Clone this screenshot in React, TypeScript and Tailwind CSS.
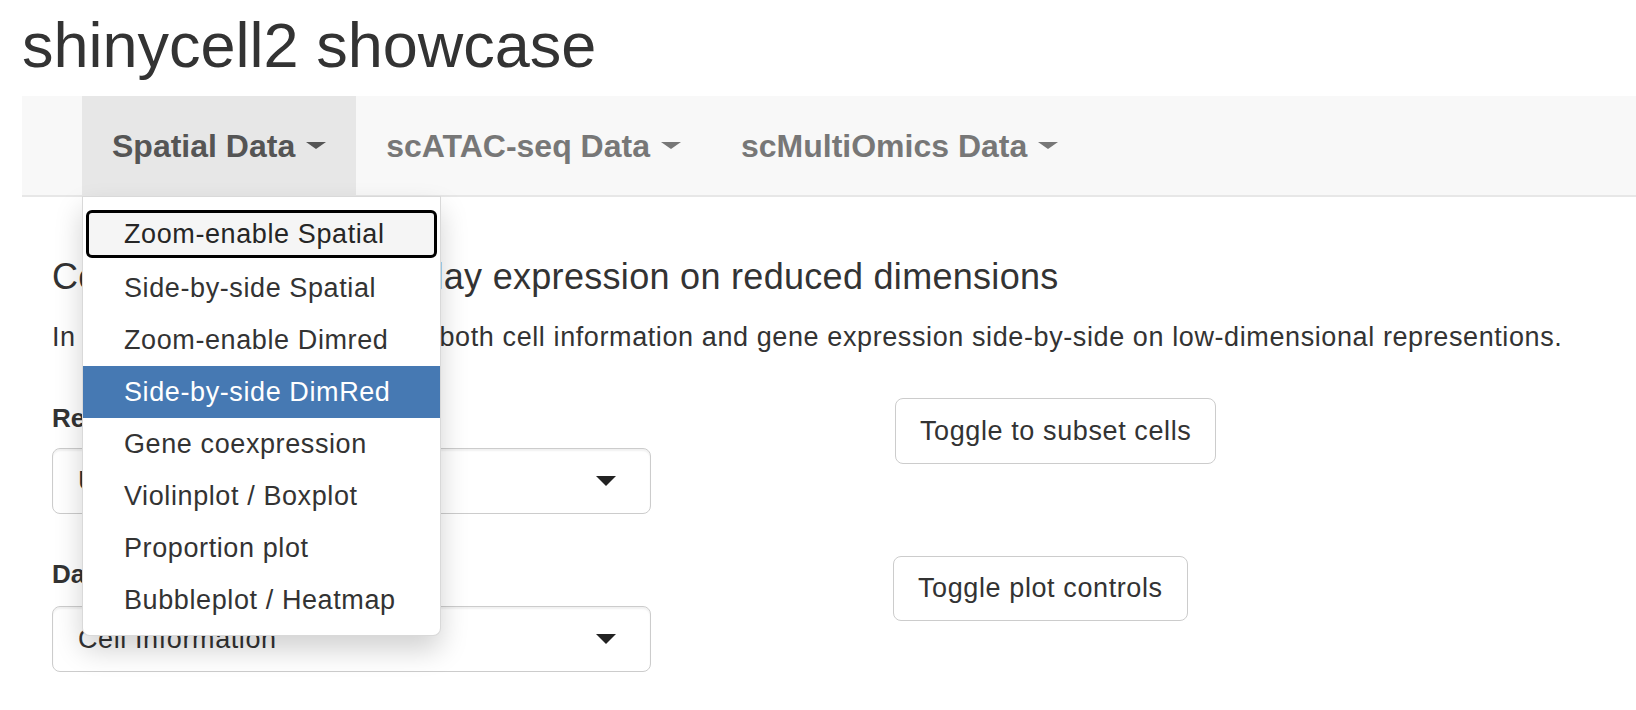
const menuItems = [
  'Zoom-enable Spatial',
  'Side-by-side Spatial',
  'Zoom-enable Dimred',
  'Side-by-side DimRed',
  'Gene coexpression',
  'Violinplot / Boxplot',
  'Proportion plot',
  'Bubbleplot / Heatmap',
]

function Caret({ className }: { className: string }) {
  return <span className={`inline-block h-0 w-0 border-x-transparent ${className}`} />
}

function SelectBox({ value }: { value: string }) {
  return (
    <div className="flex h-[66px] w-[599px] items-center justify-between rounded-[8px] border border-[#cccccc] bg-white pl-[25px] pr-[34px] shadow-[inset_0_2px_2px_rgba(0,0,0,0.06)]">
      <span className="text-[27px] leading-[64px] tracking-[0.6px] text-[#333]">{value}</span>
      <Caret className="border-x-[10px] border-t-[10px] border-t-[#222]" />
    </div>
  )
}

export default function App() {
  return (
    <div className="relative min-h-[710px] bg-white font-['Liberation_Sans',Arial,sans-serif] text-[#333]">
      <div className="pl-[22px]">
        {/* Title */}
        <div className="h-[96px] pt-[14px]">
          <h1 className="text-[63px] leading-[62px] text-[#333]">shinycell2 showcase</h1>
        </div>

        {/* Navbar */}
        <nav className="flex h-[101px] border-b-2 border-[#e7e7e7] bg-[#f8f8f8] pl-[60px]">
          <div className="flex h-[99px] items-center gap-[11px] bg-[#e7e7e7] px-[30px] text-[32px] font-bold text-[#555]">
            Spatial Data
            <Caret className="border-x-[10px] border-t-[7px] border-t-[#555]" />
          </div>
          <div className="flex h-[99px] items-center gap-[11px] px-[30px] text-[32px] font-bold text-[#777]">
            scATAC-seq Data
            <Caret className="border-x-[10px] border-t-[7px] border-t-[#777]" />
          </div>
          <div className="flex h-[99px] items-center gap-[11px] px-[30px] text-[32px] font-bold text-[#777]">
            scMultiOmics Data
            <Caret className="border-x-[10px] border-t-[7px] border-t-[#777]" />
          </div>
        </nav>

        {/* Main content */}
        <div className="pl-[30px]">
          <h4 className="mt-[60px] text-[36px] leading-[40px] font-medium tracking-[0.3px] text-[#333]">
            Cell info and gene: display expression on reduced dimensions
          </h4>
          <p className="mt-[22px] text-[27px] leading-[36px] tracking-[0.6px] text-[#333]">
            In this tab, users can visualise both cell information and gene expression side-by-side on low-dimensional representions.
          </p>

          <div className="mt-[43px] flex">
            <div className="w-[599px] pt-[4px]">
              <label className="block text-[26px] leading-[32px] font-bold">Reduction method:</label>
              <div className="mt-[14px]">
                <SelectBox value="UMAP" />
              </div>
            </div>
            <div className="ml-[244px]">
              <button className="h-[66px] rounded-[8px] border border-[#cccccc] bg-white px-[24px] text-[27px] tracking-[0.6px] text-[#333]">
                Toggle to subset cells
              </button>
            </div>
          </div>

          <div className="mt-[42px] flex">
            <div className="w-[599px] pt-[2px]">
              <label className="block text-[26px] leading-[32px] font-bold">Data type:</label>
              <div className="mt-[16px]">
                <SelectBox value="Cell Information" />
              </div>
            </div>
            <div className="ml-[242px]">
              <button className="h-[65px] rounded-[8px] border border-[#cccccc] bg-white px-[24px] text-[27px] tracking-[0.6px] text-[#333]">
                Toggle plot controls
              </button>
            </div>
          </div>
        </div>
      </div>

      {/* Open dropdown menu */}
      <ul className="absolute left-[82px] top-[196px] z-10 w-[359px] rounded-b-[8px] border border-[rgba(0,0,0,0.15)] bg-white pt-[11px] pb-[9px] shadow-[0_14px_28px_rgba(0,0,0,0.18)]">
        {menuItems.map((item, i) => (
          <li key={item} className="h-[52px]">
            {i === 0 ? (
              <div className="mx-[3px] my-[2px] h-[48px] rounded-[6px] border-[3px] border-black bg-[#f5f5f5] pl-[35px] text-[27px] leading-[42px] tracking-[0.6px] text-[#262626]">
                {item}
              </div>
            ) : (
              <div
                className={`pl-[41px] text-[27px] leading-[52px] tracking-[0.6px] ${
                  i === 3 ? 'bg-[#4679b3] text-white' : 'text-[#333]'
                }`}
              >
                {item}
              </div>
            )}
          </li>
        ))}
      </ul>
    </div>
  )
}
